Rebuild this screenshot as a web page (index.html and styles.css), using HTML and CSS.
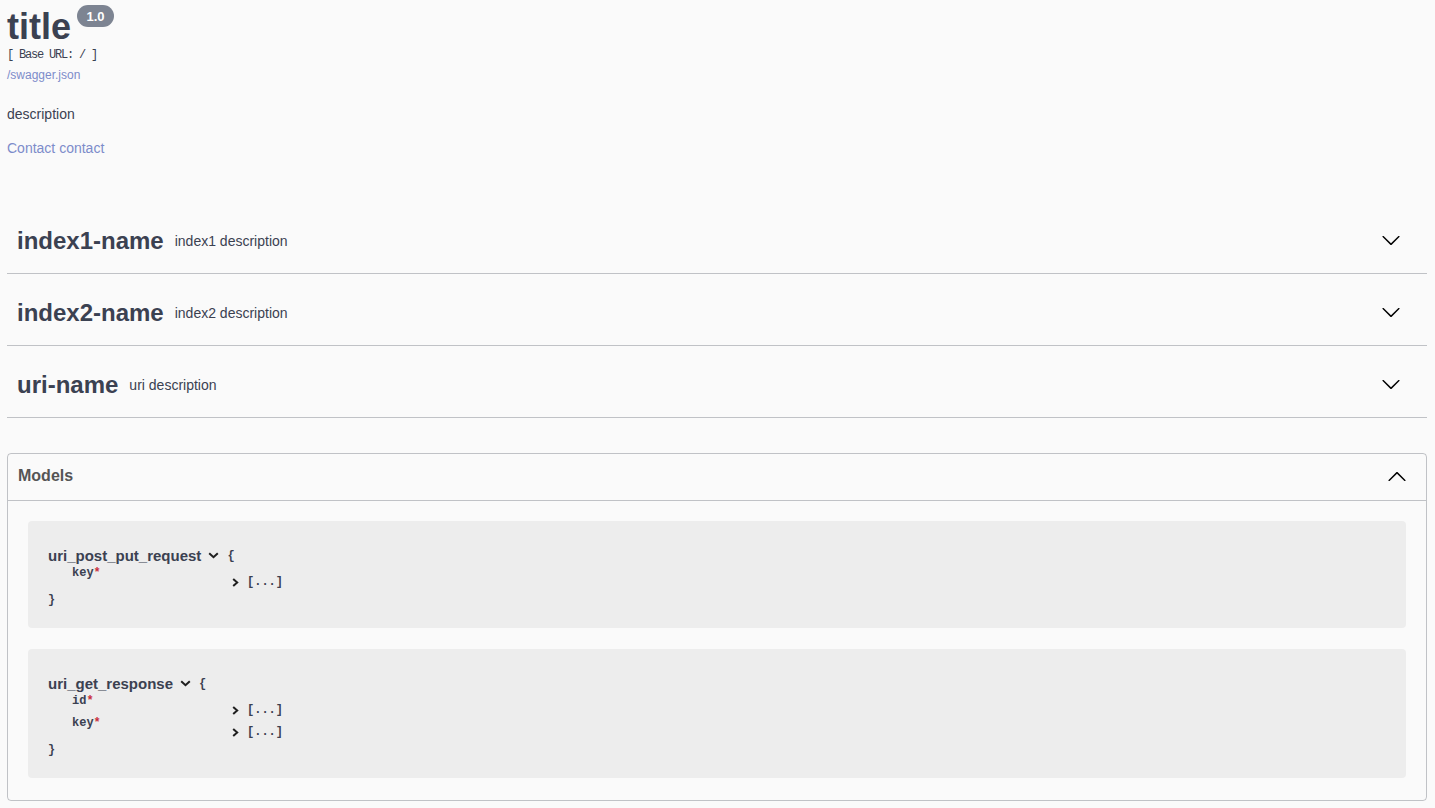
FILE: index.html
```html
<!DOCTYPE html>
<html lang="en">
<head>
<meta charset="utf-8">
<title>Swagger UI</title>
<link rel="stylesheet" href="styles.css">
</head>
<body>
<div class="wrapper">
  <section class="info">
    <div class="title-row">
      <h2 class="title">title</h2>
      <span class="version">1.0</span>
    </div>
    <div class="base-url">[ Base URL: / ]</div>
    <a class="link spec-link" href="#">/swagger.json</a>
    <p class="desc">description</p>
    <a class="link contact" href="#">Contact contact</a>
  </section>

  <div class="tags">
    <div class="tag">
      <h3 class="tag-name">index1-name</h3>
      <span class="tag-desc">index1 description</span>
      <svg class="expand" width="20" height="20" viewBox="0 0 20 20"><path d="M17.418 6.109c.272-.268.709-.268.979 0s.271.701 0 .969l-7.908 7.830c-.27.268-.707.268-.979 0l-7.908-7.830c-.27-.268-.27-.701 0-.969.271-.268.709-.268.979 0L10 13.250l7.418-7.141z"/></svg>
    </div>
    <div class="tag">
      <h3 class="tag-name">index2-name</h3>
      <span class="tag-desc">index2 description</span>
      <svg class="expand" width="20" height="20" viewBox="0 0 20 20"><path d="M17.418 6.109c.272-.268.709-.268.979 0s.271.701 0 .969l-7.908 7.830c-.27.268-.707.268-.979 0l-7.908-7.830c-.27-.268-.27-.701 0-.969.271-.268.709-.268.979 0L10 13.250l7.418-7.141z"/></svg>
    </div>
    <div class="tag">
      <h3 class="tag-name">uri-name</h3>
      <span class="tag-desc">uri description</span>
      <svg class="expand" width="20" height="20" viewBox="0 0 20 20"><path d="M17.418 6.109c.272-.268.709-.268.979 0s.271.701 0 .969l-7.908 7.830c-.27.268-.707.268-.979 0l-7.908-7.830c-.27-.268-.27-.701 0-.969.271-.268.709-.268.979 0L10 13.250l7.418-7.141z"/></svg>
    </div>
  </div>

  <section class="models">
    <h4 class="models-head">
      <span class="models-title">Models</span>
      <svg class="collapse" width="20" height="20" viewBox="0 0 20 20"><path d="M17.418 14.908c.272.268.709.268.979 0s.271-.701 0-.969l-7.908-7.830c-.27-.268-.707-.268-.979 0l-7.908 7.830c-.27.268-.27.701 0 .969.271.268.709.268.979 0L10 7.767l7.418 7.141z"/></svg>
    </h4>
    <div class="models-body">
      <div class="model-container">
        <div class="model-title">
          <span>uri_post_put_request</span>
          <svg class="toggle-down" width="11" height="7" viewBox="0 0 11 7"><polyline points="1.2,1.2 5.5,5.2 9.8,1.2"/></svg>
          <span class="brace">{</span>
        </div>
        <div class="props">
          <div class="prop-row">
            <span class="prop-name">key<span class="star">*</span></span>
            <span class="prop-value"><svg class="toggle-right" width="7" height="9" viewBox="0 0 7 9"><polyline points="1.2,1 5.2,4.5 1.2,8"/></svg><span>[...]</span></span>
          </div>
        </div>
        <div class="brace close">}</div>
      </div>

      <div class="model-container">
        <div class="model-title">
          <span>uri_get_response</span>
          <svg class="toggle-down" width="11" height="7" viewBox="0 0 11 7"><polyline points="1.2,1.2 5.5,5.2 9.8,1.2"/></svg>
          <span class="brace">{</span>
        </div>
        <div class="props">
          <div class="prop-row">
            <span class="prop-name">id<span class="star">*</span></span>
            <span class="prop-value"><svg class="toggle-right" width="7" height="9" viewBox="0 0 7 9"><polyline points="1.2,1 5.2,4.5 1.2,8"/></svg><span>[...]</span></span>
          </div>
          <div class="prop-row">
            <span class="prop-name">key<span class="star">*</span></span>
            <span class="prop-value"><svg class="toggle-right" width="7" height="9" viewBox="0 0 7 9"><polyline points="1.2,1 5.2,4.5 1.2,8"/></svg><span>[...]</span></span>
          </div>
        </div>
        <div class="brace close">}</div>
      </div>
    </div>
  </section>
</div>
</body>
</html>
```

FILE: styles.css
```css
html, body {
  margin: 0;
  padding: 0;
  background: #fafafa;
}

body {
  font-family: "Liberation Sans", Arial, sans-serif;
  color: #3b4151;
}

.wrapper {
  padding: 0 8px 0 7px;
}

/* ---------- info ---------- */
.info {
  padding-top: 5px;
  display: flex;
  flex-direction: column;
  align-items: flex-start;
}

.title-row {
  display: flex;
  align-items: flex-start;
}

.title {
  margin: 0;
  font-size: 36px;
  line-height: 44px;
  font-weight: 700;
  color: #3b4151;
}

.version {
  margin-left: 6px;
  width: 37px;
  height: 22px;
  border-radius: 11px;
  background: #7d8492;
  color: #fff;
  font-size: 13px;
  font-weight: 700;
  display: flex;
  align-items: center;
  justify-content: center;
}

.base-url {
  font-family: "Liberation Mono", monospace;
  font-size: 12px;
  letter-spacing: -1.2px;
  line-height: 12px;
  color: #3b4151;
}

.link {
  color: #7d8cca;
  text-decoration: none;
}

.spec-link {
  margin-top: 4px;
  font-size: 12px;
  line-height: 20px;
}

.desc {
  margin: 19px 0 0;
  font-size: 14px;
  line-height: 20px;
}

.contact {
  margin-top: 14px;
  font-size: 14px;
  line-height: 20px;
}

/* ---------- tags ---------- */
.tags {
  margin-top: 51px;
}

.tag {
  display: flex;
  align-items: center;
  height: 44px;
  padding: 10px 20px 10px 10px;
  border-bottom: 1px solid rgba(59, 65, 81, 0.3);
  margin-bottom: 7px;
}

.tag-name {
  margin: 0;
  font-size: 24px;
  line-height: 32px;
  font-weight: 700;
  color: #3b4151;
}

.tag-desc {
  flex: 1;
  padding: 0 11px;
  font-size: 14px;
  line-height: 20px;
}

.expand {
  margin-right: 6px;
  margin-top: -2px;
  fill: #000;
}

/* ---------- models ---------- */
.models {
  margin-top: 35px;
  border: 1px solid rgba(59, 65, 81, 0.3);
  border-radius: 4px;
}

.models-head {
  margin: 0;
  display: flex;
  align-items: center;
  height: 26px;
  padding: 9px 19px 11px 10px;
  border-bottom: 1px solid rgba(59, 65, 81, 0.3);
  font-size: 16px;
  font-weight: 700;
  color: #555;
}

.models-title {
  flex: 1;
}

.collapse {
  fill: #000;
  margin-top: -1px;
}

.models-body {
  padding: 20px 20px 22px;
  display: flex;
  flex-direction: column;
  gap: 21px;
}

.model-container {
  background: rgba(0, 0, 0, 0.05);
  border-radius: 4px;
  padding: 26px 20px 21px;
}

.model-title {
  display: flex;
  align-items: center;
  height: 17px;
  font-size: 15px;
  font-weight: 700;
  line-height: 17px;
  color: #3b4151;
}

.toggle-down {
  margin-left: 7px;
  fill: none;
  stroke: #1f1f1f;
  stroke-width: 2;
}

.brace {
  font-family: "Liberation Mono", monospace;
  font-size: 12px;
  font-weight: 700;
  line-height: 14px;
  color: #3b4151;
}

.model-title .brace {
  margin-left: 8px;
}

.brace.close {
  margin-top: 7px;
}

.props {
  margin-left: 24px;
}

.prop-row {
  display: grid;
  grid-template-columns: 160px auto;
  height: 22px;
  font-family: "Liberation Mono", monospace;
  font-size: 12px;
  font-weight: 700;
  line-height: 14px;
  color: #3b4151;
}

.prop-name {
  align-self: start;
  padding-top: 2px;
}

.star {
  color: #c9303c;
}

.prop-value {
  display: flex;
  align-items: center;
  height: 14px;
  padding-top: 11px;
}

.toggle-right {
  margin-right: 8px;
  fill: none;
  stroke: #1f1f1f;
  stroke-width: 2;
}
```
